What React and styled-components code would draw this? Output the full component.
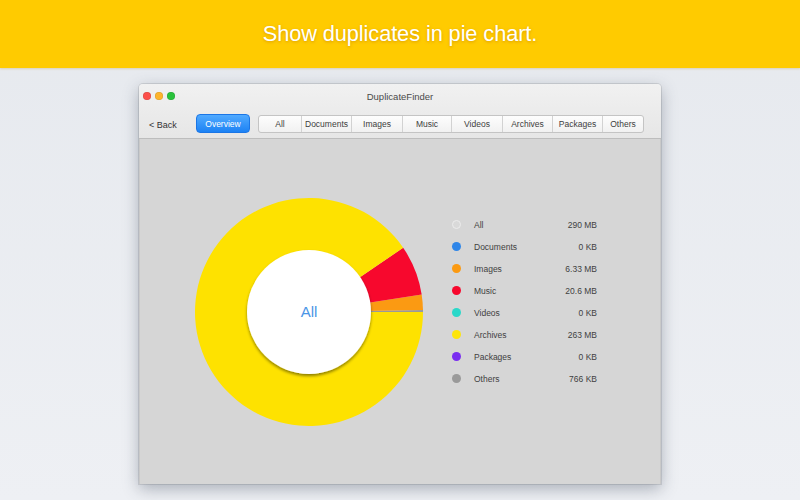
import React from "react";
import styled, { createGlobalStyle } from "styled-components";

const GlobalStyle = createGlobalStyle`
  html, body {
    margin: 0;
    padding: 0;
    width: 800px;
    height: 500px;
    overflow: hidden;
    font-family: "Liberation Sans", Arial, sans-serif;
    background: linear-gradient(180deg, #e6e9ee 0%, #eef0f4 100%);
  }
`;

const TABS = ["All", "Documents", "Images", "Music", "Videos", "Archives", "Packages", "Others"];
const TAB_WIDTHS = [42, 50, 51, 49, 51, 50, 50, 41];

const LEGEND = [
  { name: "All", value: "290 MB", color: "#d9d9d9", ring: true },
  { name: "Documents", value: "0 KB", color: "#2f86e8" },
  { name: "Images", value: "6.33 MB", color: "#fb9a12" },
  { name: "Music", value: "20.6 MB", color: "#f7082d" },
  { name: "Videos", value: "0 KB", color: "#2ad8c9" },
  { name: "Archives", value: "263 MB", color: "#fde50a" },
  { name: "Packages", value: "0 KB", color: "#7a2ef0" },
  { name: "Others", value: "766 KB", color: "#9a9a9a" },
];

// slices drawn counter-clockwise from 3 o'clock, sizes in MB
const SLICES = [
  { size: 0.766, color: "#9a9a9a" },
  { size: 6.33, color: "#fb9a12" },
  { size: 20.6, color: "#f7082d" },
  { size: 263, color: "#fee200" },
];

const Page = styled.div`
  display: flex;
  flex-direction: column;
  align-items: center;
  height: 500px;
`;

const Banner = styled.header`
  width: 100%;
  height: 68px;
  background: #ffcb00;
  display: flex;
  align-items: center;
  justify-content: center;
  box-shadow: 0 1px 2px rgba(180, 140, 0, 0.25);
`;

const BannerText = styled.h1`
  margin: 0;
  color: #fff;
  font-family: "Liberation Sans", Arial, sans-serif;
  font-weight: 400;
  font-size: 21.8px;
  letter-spacing: -0.1px;
  text-shadow: 0 1px 3px rgba(190, 120, 0, 0.55);
`;

const Window = styled.div`
  margin-top: 16px;
  width: 522px;
  height: 400px;
  display: flex;
  flex-direction: column;
  border-radius: 4px 4px 0 0;
  overflow: hidden;
  box-shadow: 0 5px 16px rgba(60, 70, 90, 0.38), 0 0 0 1px rgba(0, 0, 0, 0.1);
`;

const Chrome = styled.div`
  background: linear-gradient(180deg, #f1f1f1 0%, #e6e6e6 100%);
  border-bottom: 1px solid #bdbdbd;
`;

const TitleBar = styled.div`
  position: relative;
  height: 24px;
  display: flex;
  align-items: center;
  justify-content: center;
  font-size: 9.5px;
  color: #4a4a4a;
`;

const Lights = styled.div`
  position: absolute;
  left: 4px;
  top: 8px;
  display: flex;
  gap: 4px;
`;

const Light = styled.span`
  width: 8px;
  height: 8px;
  border-radius: 50%;
  background: ${(p) => p.$color};
  box-shadow: inset 0 0 0 0.5px rgba(0, 0, 0, 0.15);
`;

const Toolbar = styled.div`
  height: 30px;
  box-sizing: border-box;
  display: flex;
  align-items: center;
  padding-left: 10px;
  padding-top: 1px;
`;

const BackLink = styled.span`
  font-size: 9px;
  color: #333;
  width: 47px;
  margin-top: 3px;
`;

const PrimaryButton = styled.button`
  width: 54px;
  height: 19px;
  border: 1px solid #1b76e6;
  border-radius: 4px;
  background: linear-gradient(180deg, #50aaff 0%, #1d82f4 100%);
  color: #fff;
  font-family: inherit;
  font-size: 8.5px;
  padding: 0;
  margin-right: 8px;
`;

const Segmented = styled.div`
  display: flex;
  height: 18px;
  box-sizing: border-box;
  margin-top: 1px;
  border: 1px solid #c4c4c4;
  border-radius: 3px;
  background: linear-gradient(180deg, #fdfdfd 0%, #f1f1f1 100%);
`;

const Segment = styled.span`
  box-sizing: border-box;
  width: ${(p) => p.$w}px;
  display: flex;
  align-items: center;
  justify-content: center;
  font-size: 8.5px;
  color: #3d3d3d;
  border-left: ${(p) => (p.$first ? "none" : "1px solid #d2d2d2")};
`;

const Content = styled.div`
  flex: 1;
  background: #d6d6d6;
  display: flex;
  align-items: center;
  padding-left: 53px;
  border-left: 1px solid #c9c9c9;
  border-right: 1px solid #c9c9c9;
`;

const Legend = styled.ul`
  list-style: none;
  margin: 0 0 20px 27px;
  padding: 0;
  width: 145px;
`;

const LegendRow = styled.li`
  height: 22px;
  display: flex;
  align-items: center;
  font-size: 8.5px;
  color: #3f3f3f;
`;

const Dot = styled.span`
  box-sizing: border-box;
  width: 9px;
  height: 9px;
  border-radius: 50%;
  background: ${(p) => p.$color};
  border: ${(p) => (p.$ring ? "1.5px solid #ececec" : "none")};
  margin-right: 13px;
  flex-shrink: 0;
`;

const Label = styled.span`
  flex: 1;
`;

const Value = styled.span`
  text-align: right;
`;

function arc(cx, cy, r, a0, a1) {
  const p = (a) => [cx + r * Math.cos(a), cy - r * Math.sin(a)];
  const [x0, y0] = p(a0);
  const [x1, y1] = p(a1);
  const large = a1 - a0 > Math.PI ? 1 : 0;
  return `M${cx},${cy} L${x0},${y0} A${r},${r} 0 ${large} 0 ${x1},${y1} Z`;
}

function Donut() {
  const total = SLICES.reduce((s, x) => s + x.size, 0);
  let start = 0;
  const paths = SLICES.map((s, i) => {
    const end = start + (s.size / total) * Math.PI * 2;
    const d = arc(116, 116, 114, start, end);
    start = end;
    return <path key={i} d={d} fill={s.color} />;
  });
  return (
    <svg width="232" height="232" viewBox="0 0 232 232">
      <defs>
        <filter id="hole" x="-20%" y="-20%" width="140%" height="150%">
          <feDropShadow dx="0" dy="2" stdDeviation="1.6" floodColor="#000" floodOpacity="0.45" />
        </filter>
      </defs>
      {paths}
      <circle cx="116" cy="116" r="62" fill="#fff" filter="url(#hole)" />
      <text
        x="116"
        y="121"
        textAnchor="middle"
        fontFamily="Liberation Sans, Arial, sans-serif"
        fontSize="15"
        fill="#4a95e6"
      >
        All
      </text>
    </svg>
  );
}

export default function App() {
  return (
    <>
      <GlobalStyle />
      <Page>
        <Banner>
          <BannerText>Show duplicates in pie chart.</BannerText>
        </Banner>
        <Window>
          <Chrome>
            <TitleBar>
              <Lights>
                <Light $color="#fc4f4a" />
                <Light $color="#fdb42c" />
                <Light $color="#29c23b" />
              </Lights>
              DuplicateFinder
            </TitleBar>
            <Toolbar>
              <BackLink>&lt; Back</BackLink>
              <PrimaryButton>Overview</PrimaryButton>
              <Segmented>
                {TABS.map((t, i) => (
                  <Segment key={t} $w={TAB_WIDTHS[i]} $first={i === 0}>
                    {t}
                  </Segment>
                ))}
              </Segmented>
            </Toolbar>
          </Chrome>
          <Content>
            <Donut />
            <Legend>
              {LEGEND.map((l) => (
                <LegendRow key={l.name}>
                  <Dot $color={l.color} $ring={l.ring} />
                  <Label>{l.name}</Label>
                  <Value>{l.value}</Value>
                </LegendRow>
              ))}
            </Legend>
          </Content>
        </Window>
      </Page>
    </>
  );
}
